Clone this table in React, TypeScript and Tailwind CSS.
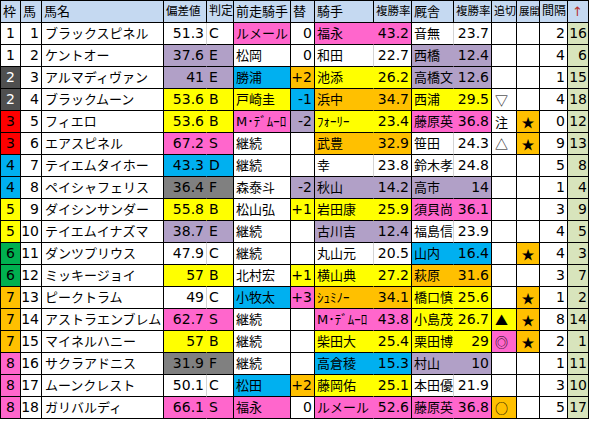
import React from "react";

const C: Record<string, string> = {
  w: "bg-white",
  p: "bg-[#ff66cc]",
  l: "bg-[#b1a0c7]",
  y: "bg-[#ffff00]",
  o: "bg-[#ffc000]",
  c: "bg-[#00b0f0]",
  g: "bg-[#808080]",
};

const WAKU: Record<number, string> = {
  1: "bg-white text-black",
  2: "bg-[#4f4f4f] text-white",
  3: "bg-[#ff0000] text-black",
  4: "bg-[#00b0f0] text-black",
  5: "bg-[#ffff00] text-black",
  6: "bg-[#00b050] text-black",
  7: "bg-[#ffc000] text-black",
  8: "bg-[#ff66cc] text-black",
};

type Row = {
  waku: number;
  no: number;
  name: string;
  dev: string;
  devC: string;
  judge: string;
  prev: string;
  prevC: string;
  chg: string;
  chgC: string;
  jockey: string;
  jockeyC: string;
  rate: string;
  stable: string;
  stableC: string;
  srate: string;
  oi: string;
  oiC: string;
  ten: string;
  tenC: string;
  gap: string;
  up: string;
};

const raw: string[] = [
  "1|1|ブラックスピネル|51.3|w|C|ルメール|p|0|w|福永|p|43.2|音無|w|23.7||w||w|2|16",
  "1|2|ケントオー|37.6|l|E|松岡|w|0|w|和田|w|22.7|西橋|l|12.4||w||w|4|6",
  "2|3|アルマディヴァン|41|l|E|勝浦|c|+2|o|池添|y|26.2|高橋文|l|12.6||w||w|1|15",
  "2|4|ブラックムーン|53.6|y|B|戸崎圭|y|-1|c|浜中|o|34.7|西浦|y|29.5|▽|w||w|4|18",
  "3|5|フィエロ|53.6|y|B|M･ﾃﾞﾑｰﾛ|p|-2|l|ﾌｫｰﾘｰ|y|23.4|藤原英|p|36.8|注|w|★|o|0|12",
  "3|6|エアスピネル|67.2|p|S|継続|w||w|武豊|o|32.9|笹田|w|24.3|△|w|★|o|9|13",
  "4|7|テイエムタイホー|43.3|c|D|継続|w||w|幸|w|23.8|鈴木孝|w|24.8||w||w|5|8",
  "4|8|ペイシャフェリス|36.4|g|F|森泰斗|w|-2|l|秋山|l|14.2|高市|l|14||w||w|1|4",
  "5|9|ダイシンサンダー|55.8|y|B|松山弘|w|+1|y|岩田康|y|25.9|須貝尚|p|36.1||w||w|3|9",
  "5|10|テイエムイナズマ|38.7|l|E|継続|w||w|古川吉|l|12.4|福島信|w|23.9||w||w|4|5",
  "6|11|ダンツプリウス|47.9|w|C|継続|w||w|丸山元|w|20.5|山内|c|16.4||w|★|o|4|3",
  "6|12|ミッキージョイ|57|y|B|北村宏|w|+1|y|横山典|y|27.2|萩原|o|31.6||w||w|3|7",
  "7|13|ピークトラム|49|w|C|小牧太|c|+3|p|ｼｭﾐﾉｰ|o|34.1|橋口慎|y|25.6||w|★|o|1|2",
  "7|14|アストラエンブレム|62.7|p|S|継続|w||w|M･ﾃﾞﾑｰﾛ|p|43.8|小島茂|y|26.7|▲|y|★|o|8|14",
  "7|15|マイネルハニー|57|y|B|継続|w||w|柴田大|y|25.4|栗田博|y|29|◎|p|★|o|2|1",
  "8|16|サクラアドニス|31.9|g|F|継続|w||w|高倉稜|c|15.3|村山|l|10||w||w|1|11",
  "8|17|ムーンクレスト|50.1|w|C|松田|c|+2|o|藤岡佑|y|25.1|本田優|w|21.9||w||w|3|10",
  "8|18|ガリバルディ|66.1|p|S|福永|p|0|w|ルメール|p|52.6|藤原英|p|36.8|○|o||w|5|17",
];

const rows: Row[] = raw.map((s) => {
  const f = s.split("|");
  return {
    waku: Number(f[0]),
    no: Number(f[1]),
    name: f[2],
    dev: f[3],
    devC: f[4],
    judge: f[5],
    prev: f[6],
    prevC: f[7],
    chg: f[8],
    chgC: f[9],
    jockey: f[10],
    jockeyC: f[11],
    rate: f[12],
    stable: f[13],
    stableC: f[14],
    srate: f[15],
    oi: f[16],
    oiC: f[17],
    ten: f[18],
    tenC: f[19],
    gap: f[20],
    up: f[21],
  };
});

// inner line of a merged pair: grey gridline on white, hidden on colour
function inner(c: string) {
  return c === "w" ? "border-r-[#d4d4d4]" : "border-r-transparent";
}

function Cell({
  w,
  className = "",
  children,
}: {
  w: string;
  className?: string;
  children?: React.ReactNode;
}) {
  return (
    <div
      className={`${w} h-[22px] shrink-0 border-r border-b border-black leading-[21px] whitespace-nowrap overflow-hidden ${className}`}
    >
      {children}
    </div>
  );
}

// header labels are shrunk to fit like the sheet does
const head = [
  { t: "枠", w: "w-[20px]", s: "" },
  { t: "馬", w: "w-[21px]", s: "" },
  { t: "馬名", w: "w-[122px]", s: "" },
  { t: "偏差値", w: "w-[43px]", s: "text-[11.5px]" },
  { t: "判定", w: "w-[27px]", s: "text-[12px]" },
  { t: "前走騎手", w: "w-[57px]", s: "" },
  { t: "替", w: "w-[24px]", s: "" },
  { t: "騎手", w: "w-[59px]", s: "" },
  { t: "複勝率", w: "w-[38px]", s: "text-[11.5px]" },
  { t: "厩舎", w: "w-[42px]", s: "" },
  { t: "複勝率", w: "w-[38px]", s: "text-[11.5px]" },
  { t: "追切", w: "w-[25px]", s: "text-[11px]" },
  { t: "展開", w: "w-[23px]", s: "text-[10.5px]" },
  { t: "間隔", w: "w-[28px]", s: "text-[12px]" },
];

const cjk = "font-['Noto_Sans_CJK_JP',sans-serif]";
const num = "text-[14px]";

export default function App() {
  return (
    <div className="w-[590px] h-[421px] bg-white overflow-hidden text-[13px] text-black font-['DejaVu_Sans','Noto_Sans_CJK_JP',sans-serif]">
      <div className="w-[589px] border-l border-t border-black">
        <div className="flex bg-[#c5d9f1]">
          {head.map((h, i) => (
            <Cell key={i} w={h.w} className={`pl-[2px] ${h.s}`}>
              {h.t}
            </Cell>
          ))}
          <Cell w="w-[21px]" className="pl-[4px] text-[#b8312f]">
            ↑
          </Cell>
        </div>
        {rows.map((r) => (
          <div key={r.no} className="flex">
            <Cell w="w-[20px]" className={`text-center ${num} ${WAKU[r.waku]}`}>
              {r.waku}
            </Cell>
            <Cell w="w-[21px]" className={`text-right pr-[2px] ${num} bg-white`}>
              {r.no}
            </Cell>
            <Cell w="w-[122px]" className="pl-[3px] bg-white">
              {r.name}
            </Cell>
            <Cell w="w-[43px]" className={`text-right pr-[2px] ${num} ${C[r.devC]} ${inner(r.devC)}`}>
              {r.dev}
            </Cell>
            <Cell w="w-[27px]" className={`pl-[2px] ${num} ${C[r.devC]}`}>
              {r.judge}
            </Cell>
            <Cell w="w-[57px]" className={`pl-[2px] ${C[r.prevC]}`}>
              {r.prev}
            </Cell>
            <Cell w="w-[24px]" className={`text-right pr-[2px] ${num} ${C[r.chgC]}`}>
              {r.chg}
            </Cell>
            <Cell w="w-[59px]" className={`pl-[2px] ${C[r.jockeyC]} ${inner(r.jockeyC)}`}>
              {r.jockey}
            </Cell>
            <Cell w="w-[38px]" className={`text-right pr-[2px] ${num} ${C[r.jockeyC]}`}>
              {r.rate}
            </Cell>
            <Cell w="w-[42px]" className={`pl-[2px] ${C[r.stableC]} ${inner(r.stableC)}`}>
              {r.stable}
            </Cell>
            <Cell w="w-[38px]" className={`text-right pr-[2px] ${num} ${C[r.stableC]}`}>
              {r.srate}
            </Cell>
            <Cell w="w-[25px]" className={`pl-[3px] ${cjk} ${C[r.oiC]}`}>
              {r.oi}
            </Cell>
            <Cell w="w-[23px]" className={`text-center ${cjk} ${C[r.tenC]}`}>
              {r.ten}
            </Cell>
            <Cell w="w-[28px]" className={`text-right pr-[2px] ${num} bg-white`}>
              {r.gap}
            </Cell>
            <Cell w="w-[21px]" className={`text-right pr-[1px] ${num} bg-[#d8e4bc]`}>
              {r.up}
            </Cell>
          </div>
        ))}
      </div>
    </div>
  );
}
